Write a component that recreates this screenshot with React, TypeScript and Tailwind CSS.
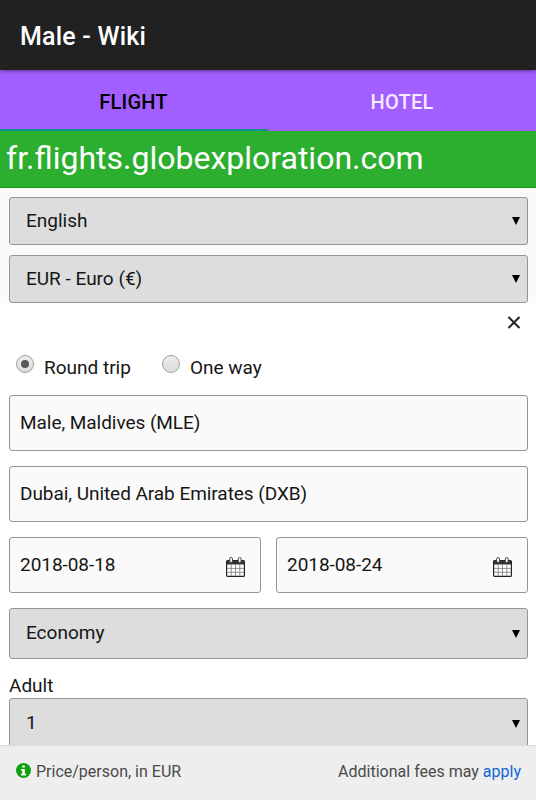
import { useState } from 'react';

function Select({ value, className = '' }: { value: string; className?: string }) {
  return (
    <button
      className={`flex w-full shrink-0 items-center justify-between rounded-[3px] border border-[#969696] bg-[#dddddd] pl-4 pr-[7px] text-left ${className}`}
    >
      <span>{value}</span>
      <svg className="h-2 w-2" viewBox="0 0 8 8">
        <path d="M0 0h8L4 8z" fill="#000" />
      </svg>
    </button>
  );
}

function CalendarIcon() {
  return (
    <svg className="mt-[3px] h-5 w-[19px]" viewBox="0 0 19 20" fill="none">
      <rect x="0.6" y="3.6" width="17.8" height="15.8" rx="1" fill="#fff" stroke="#222" strokeWidth="1.2" />
      <path d="M1 3.5h17v4H1z" fill="#333" />
      <path d="M5.2 7.5v11.5M9.5 7.5v11.5M13.8 7.5v11.5M1 11.4h17M1 15.3h17" stroke="#777" strokeWidth="0.8" />
      <rect x="3.7" y="0.5" width="2.8" height="5" rx="1.3" fill="#fff" stroke="#333" strokeWidth="0.9" />
      <rect x="12.3" y="0.5" width="2.8" height="5" rx="1.3" fill="#fff" stroke="#333" strokeWidth="0.9" />
    </svg>
  );
}

function Field({ value, calendar = false }: { value: string; calendar?: boolean }) {
  return (
    <div className="flex h-14 flex-1 shrink-0 items-center justify-between rounded-[3px] border border-[#969696] bg-[#fafafa] pl-[10px] pr-[15px] tracking-[-0.05px]">
      <span>{value}</span>
      {calendar && <CalendarIcon />}
    </div>
  );
}

function Radio({ label, checked, onClick }: { label: string; checked: boolean; onClick: () => void }) {
  return (
    <button className="flex items-start" onClick={onClick}>
      <span className="flex h-[18px] w-[18px] items-center justify-center rounded-full border border-[#a0a0a0] bg-gradient-to-b from-[#ededed] to-[#dcdcdc]">
        {checked && <span className="h-2 w-2 rounded-full bg-[#5a5a5a]" />}
      </span>
      <span className="ml-[10px] mt-[1px] leading-6">{label}</span>
    </button>
  );
}

export default function App() {
  const [trip, setTrip] = useState('round');

  return (
    <div className="flex h-[800px] w-[536px] flex-col overflow-hidden bg-white font-[Roboto,sans-serif] text-[19px] text-[#161616]">
      {/* Title bar */}
      <header className="z-10 flex h-[70px] shrink-0 items-center bg-[#212121] pl-5 pt-[3px] shadow-[0_1px_4px_rgba(0,0,0,0.45)]">
        <h1 className="text-[25px] font-medium tracking-[0.2px] text-white">Male - Wiki</h1>
      </header>

      {/* Tabs */}
      <nav className="flex h-[61px] shrink-0 bg-[#a25eff] text-[20px] font-medium tracking-[0.2px]">
        <button className="w-[268px] border-b-2 border-[#079290] pt-1 pr-px text-black">FLIGHT</button>
        <button className="w-[268px] border-b-2 border-transparent pt-1 text-[#f4ecff]">HOTEL</button>
      </nav>

      <div className="flex h-[57px] shrink-0 items-center border-b border-[#0ca012] bg-[#2cae2f] pb-0.5 pl-[6px] text-[32px] text-white">
        fr.flights.globexploration.com
      </div>

      {/* Language and currency */}
      <div className="flex h-[115px] shrink-0 flex-col gap-[10px] bg-[#fafafa] pl-[9px] pr-2 pt-[9px]">
        <Select value="English" className="h-12" />
        <Select value="EUR - Euro (€)" className="h-12" />
      </div>

      {/* Search form */}
      <main className="flex min-h-0 flex-1 flex-col overflow-hidden pl-[9px] pr-2">
        <div className="flex h-[52px] shrink-0 justify-end pr-[7px] pt-[13px]">
          <svg className="h-[13px] w-[13px]" viewBox="0 0 13 13">
            <path d="M0.5 1l11 11M11.5 1l-11 11" stroke="#222" strokeWidth="2" />
          </svg>
        </div>
        <div className="flex h-[40px] shrink-0 gap-[31px] pl-[7px]">
          <Radio label="Round trip" checked={trip === 'round'} onClick={() => setTrip('round')} />
          <Radio label="One way" checked={trip === 'single'} onClick={() => setTrip('single')} />
        </div>
        <div className="flex shrink-0">
          <Field value="Male, Maldives (MLE)" />
        </div>
        <div className="mt-[15px] flex shrink-0">
          <Field value="Dubai, United Arab Emirates (DXB)" />
        </div>
        <div className="mt-[15px] flex shrink-0 gap-[15px]">
          <Field value="2018-08-18" calendar />
          <Field value="2018-08-24" calendar />
        </div>
        <Select value="Economy" className="mt-[15px] h-[51px]" />
        <label className="mt-[14px] h-[25px] shrink-0 leading-[25px]">Adult</label>
        <Select value="1" className="h-[51px]" />
      </main>

      {/* Price note */}
      <footer className="flex h-[55px] shrink-0 items-center justify-between border-t border-[#dddddd] bg-[#eeeeee] pb-0.5 pl-4 pr-[15px] text-[16px] text-[#4a4a4a]">
        <div className="flex items-center gap-[5px]">
          <svg className="mb-[3px] h-[15px] w-[15px]" viewBox="0 0 15 15">
            <circle cx="7.5" cy="7.5" r="7.5" fill="#10a010" />
            <path d="M6.2 2.4h2.6v2.1H6.2zM5 5.9h3.8v4.8H10v1.7H5v-1.7h1.2V7.6H5z" fill="#fff" />
          </svg>
          <span>Price/person, in EUR</span>
        </div>
        <div>
          Additional fees may <a className="text-[#0b66d8]">apply</a>
        </div>
      </footer>
    </div>
  );
}
